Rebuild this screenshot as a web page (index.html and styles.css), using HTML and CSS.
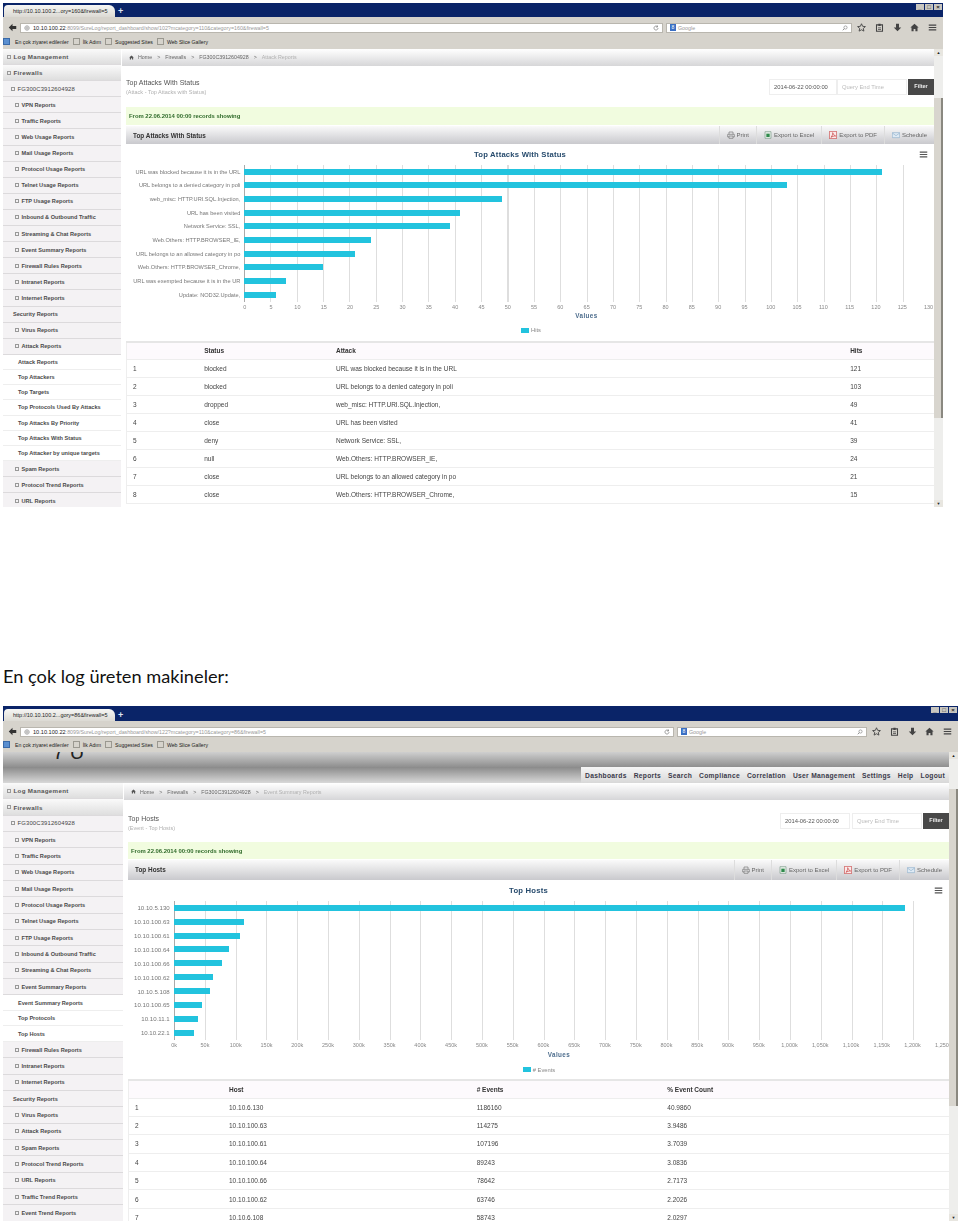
FILE: index.html
```html
<!DOCTYPE html>
<html lang="tr">
<head>
    <meta charset="UTF-8">
    <meta name="viewport" content="width=device-width, initial-scale=1.0">
    <title>SureLog raporlari</title>
    <link rel="stylesheet" href="styles.css">
</head>
<body>
    <svg class="sprite" xmlns="http://www.w3.org/2000/svg">
        <symbol id="i-back" viewBox="0 0 12 12"><path d="M1 6l5-5v3h5v4H6v3z"/></symbol>
        <symbol id="i-globe" viewBox="0 0 12 12"><circle cx="6" cy="6" r="4.5" fill="none" stroke="currentColor"/><path d="M1.5 6h9M6 1.5v9" stroke="currentColor" fill="none"/></symbol>
        <symbol id="i-reload" viewBox="0 0 12 12"><path d="M10 6a4 4 0 1 1-1.2-2.8M9 1v3H6" fill="none" stroke="currentColor" stroke-width="1.4"/></symbol>
        <symbol id="i-search" viewBox="0 0 12 12"><circle cx="7" cy="5" r="3.2" fill="none" stroke="currentColor" stroke-width="1.2"/><path d="M4.6 7.4L1.5 10.5" stroke="currentColor" stroke-width="1.6"/></symbol>
        <symbol id="i-star" viewBox="0 0 12 12"><path d="M6 1l1.5 3.4 3.7.4-2.8 2.4.8 3.6L6 9l-3.200 1.800.8-3.600L.8 4.800l3.700-.4z" fill="none" stroke="currentColor" stroke-width="1.200"/></symbol>
        <symbol id="i-clip" viewBox="0 0 12 12"><path d="M2 2.500h8v8.500H2z" fill="none" stroke="currentColor" stroke-width="1.400"/><path d="M4.500 1h3v3h-3zM4 6h4v1H4zM4 8h4v1H4z"/></symbol>
        <symbol id="i-down" viewBox="0 0 12 12"><path d="M4 1h4v5h3l-5 5-5-5h3z"/></symbol>
        <symbol id="i-home" viewBox="0 0 12 12"><path d="M6 1l5.500 5H10v5H7.200V8H4.800v3H2V6H.5z"/></symbol>
        <symbol id="i-menu" viewBox="0 0 12 12"><path d="M1 2h10v1.600H1zM1 5.200h10v1.600H1zM1 8.400h10V10H1z"/></symbol>
        <symbol id="i-print" viewBox="0 0 12 12"><path d="M3 5V1.500h6V5M1 5h10v4H9M3 9H1V5M3 7.500h6V11H3z" fill="none" stroke="currentColor"/></symbol>
        <symbol id="i-excel" viewBox="0 0 12 12"><path d="M1.500 1h9v10h-9z" fill="#e8f0e8" stroke="#7a9a8a"/><path d="M3.500 4h5v5h-5z" fill="#2f8a4c"/></symbol>
        <symbol id="i-pdf" viewBox="0 0 12 12"><path d="M.5.5h11v11H.5z" fill="#fbeaea" stroke="#c43a3a"/><path d="M3 9.500C5 7 6 4.500 5.500 2.500 6.500 5 8 7 10 7.500 7.500 7.500 5 8 3 9.500z" fill="none" stroke="#c43a3a"/></symbol>
        <symbol id="i-mail" viewBox="0 0 12 12"><path d="M.5 2.500h11v7.500H.5z" fill="#dfeaf4" stroke="#8fb0cc"/><path d="M.5 3L6 7l5.500-4" fill="none" stroke="#8fb0cc"/></symbol>
    </svg>

    <section class="shot shot-attacks">
        <div class="titlebar">
            <div class="tab">http://10.10.100.2...ory=160&amp;firewall=5</div>
            <span class="new-tab">+</span>
            <div class="win-buttons"><i>_</i><i>&#9633;</i><i>&times;</i></div>
        </div>
        <div class="navbar">
            <svg class="nav-back"><use href="#i-back"/></svg>
            <div class="urlbar">
                <svg class="tb-icon small"><use href="#i-globe"/></svg>
                <b>10.10.100.22</b><span>:8099/SureLog/report_dashboard/show/102?mcategory=110&amp;category=160&amp;firewall=5</span>
                <svg class="tb-icon small push"><use href="#i-reload"/></svg>
            </div>
            <div class="searchbar">
                <em>8</em><span>Google</span>
                <svg class="tb-icon small push"><use href="#i-search"/></svg>
            </div>
            <div class="nav-icons">
                <svg class="tb-icon"><use href="#i-star"/></svg>
                <svg class="tb-icon"><use href="#i-clip"/></svg>
                <svg class="tb-icon"><use href="#i-down"/></svg>
                <svg class="tb-icon"><use href="#i-home"/></svg>
                <svg class="tb-icon"><use href="#i-menu"/></svg>
            </div>
        </div>
        <div class="bookmarks">
            <span class="bm bm-first">En çok ziyaret edilenler</span>
            <span class="bm">İlk Adım</span>
            <span class="bm">Suggested Sites</span>
            <span class="bm">Web Slice Gallery</span>
        </div>
        <div class="app">
            <div class="app-main">
                <aside class="sidebar">
                    <div class="side-top">Log Management</div>
                    <div class="side-top">Firewalls</div>
                    <div class="side-device">FG300C3912604928</div>
                    <div class="side-item">VPN Reports</div>
                    <div class="side-item">Traffic Reports</div>
                    <div class="side-item">Web Usage Reports</div>
                    <div class="side-item">Mail Usage Reports</div>
                    <div class="side-item">Protocol Usage Reports</div>
                    <div class="side-item">Telnet Usage Reports</div>
                    <div class="side-item">FTP Usage Reports</div>
                    <div class="side-item">Inbound &amp; Outbound Traffic</div>
                    <div class="side-item">Streaming &amp; Chat Reports</div>
                    <div class="side-item">Event Summary Reports</div>
                    <div class="side-item">Firewall Rules Reports</div>
                    <div class="side-item">Intranet Reports</div>
                    <div class="side-item">Internet Reports</div>
                    <div class="side-group">Security Reports</div>
                    <div class="side-item">Virus Reports</div>
                    <div class="side-item">Attack Reports</div>
                    <div class="side-sub">Attack Reports</div>
                    <div class="side-sub">Top Attackers</div>
                    <div class="side-sub">Top Targets</div>
                    <div class="side-sub">Top Protocols Used By Attacks</div>
                    <div class="side-sub">Top Attacks By Priority</div>
                    <div class="side-sub">Top Attacks With Status</div>
                    <div class="side-sub">Top Attacker by unique targets</div>
                    <div class="side-item">Spam Reports</div>
                    <div class="side-item">Protocol Trend Reports</div>
                    <div class="side-item">URL Reports</div>
                </aside>
                <main class="content">
                    <div class="crumbs">
                        <svg class="crumb-home"><use href="#i-home"/></svg>
                        <span>Home</span><span>&gt;</span><span>Firewalls</span><span>&gt;</span><span>FG300C3912604928</span><span>&gt;</span><span class="crumb-last">Attack Reports</span>
                    </div>
                    <div class="inner">
                        <div class="page-head">
                            <div class="page-titles">
                                <div class="page-title">Top Attacks With Status</div>
                                <div class="page-sub">(Attack - Top Attacks with Status)</div>
                            </div>
                            <div class="filters">
                                <div class="field">2014-06-22 00:00:00</div>
                                <div class="field placeholder">Query End Time</div>
                                <div class="filter-btn">Filter</div>
                            </div>
                        </div>
                        <div class="alert">From 22.06.2014 00:00 records showing</div>
                        <div class="panel-head">
                            <span class="panel-title">Top Attacks With Status</span>
                            <div class="panel-actions">
                                <span class="act"><svg><use href="#i-print"/></svg>Print</span>
                                <span class="act"><svg><use href="#i-excel"/></svg>Export to Excel</span>
                                <span class="act"><svg><use href="#i-pdf"/></svg>Export to PDF</span>
                                <span class="act"><svg><use href="#i-mail"/></svg>Schedule</span>
                            </div>
                        </div>
                        <div class="chart">
                            <div class="chart-title">Top Attacks With Status</div>
                            <svg class="chart-menu"><use href="#i-menu"/></svg>
                            <div class="plot">
                                <div class="bar-row"><span class="bar-label">URL was blocked because it is in the URL</span><div class="bar-track"><div class="bar" style="width:93.08%"></div></div></div>
                                <div class="bar-row"><span class="bar-label">URL belongs to a denied category in poli</span><div class="bar-track"><div class="bar" style="width:79.23%"></div></div></div>
                                <div class="bar-row"><span class="bar-label">web_misc: HTTP.URI.SQL.Injection,</span><div class="bar-track"><div class="bar" style="width:37.69%"></div></div></div>
                                <div class="bar-row"><span class="bar-label">URL has been visited</span><div class="bar-track"><div class="bar" style="width:31.54%"></div></div></div>
                                <div class="bar-row"><span class="bar-label">Network Service: SSL,</span><div class="bar-track"><div class="bar" style="width:30%"></div></div></div>
                                <div class="bar-row"><span class="bar-label">Web.Others: HTTP.BROWSER_IE,</span><div class="bar-track"><div class="bar" style="width:18.46%"></div></div></div>
                                <div class="bar-row"><span class="bar-label">URL belongs to an allowed category in po</span><div class="bar-track"><div class="bar" style="width:16.15%"></div></div></div>
                                <div class="bar-row"><span class="bar-label">Web.Others: HTTP.BROWSER_Chrome,</span><div class="bar-track"><div class="bar" style="width:11.54%"></div></div></div>
                                <div class="bar-row"><span class="bar-label">URL was exempted because it is in the UR</span><div class="bar-track"><div class="bar" style="width:6.15%"></div></div></div>
                                <div class="bar-row"><span class="bar-label">Update: NOD32.Update,</span><div class="bar-track"><div class="bar" style="width:4.62%"></div></div></div>
                            </div>
                            <div class="axis">
                                <span>0</span><span>5</span><span>10</span><span>15</span><span>20</span><span>25</span><span>30</span><span>35</span><span>40</span><span>45</span><span>50</span><span>55</span><span>60</span><span>65</span><span>70</span><span>75</span><span>80</span><span>85</span><span>90</span><span>95</span><span>100</span><span>105</span><span>110</span><span>115</span><span>120</span><span>125</span><span>130</span>
                            </div>
                            <div class="axis-title">Values</div>
                            <div class="legend"><i></i>Hits</div>
                        </div>
                        <table class="data">
                            <thead><tr><th></th><th>Status</th><th>Attack</th><th>Hits</th></tr></thead>
                            <tbody>
                                <tr><td>1</td><td>blocked</td><td>URL was blocked because it is in the URL</td><td>121</td></tr>
                                <tr><td>2</td><td>blocked</td><td>URL belongs to a denied category in poli</td><td>103</td></tr>
                                <tr><td>3</td><td>dropped</td><td>web_misc: HTTP.URI.SQL.Injection,</td><td>49</td></tr>
                                <tr><td>4</td><td>close</td><td>URL has been visited</td><td>41</td></tr>
                                <tr><td>5</td><td>deny</td><td>Network Service: SSL,</td><td>39</td></tr>
                                <tr><td>6</td><td>null</td><td>Web.Others: HTTP.BROWSER_IE,</td><td>24</td></tr>
                                <tr><td>7</td><td>close</td><td>URL belongs to an allowed category in po</td><td>21</td></tr>
                                <tr><td>8</td><td>close</td><td>Web.Others: HTTP.BROWSER_Chrome,</td><td>15</td></tr>
                            </tbody>
                        </table>
                    </div>
                </main>
            </div>
            <div class="scrollbar"><span class="sb-arrow">&#9650;</span><div class="sb-thumb"></div><span class="sb-arrow">&#9660;</span></div>
        </div>
    </section>

    <p class="doc-line">En çok log üreten makineler:</p>

    <section class="shot shot-hosts">
        <div class="titlebar">
            <div class="tab">http://10.10.100.2...gory=86&amp;firewall=5</div>
            <span class="new-tab">+</span>
            <div class="win-buttons"><i>_</i><i>&#9633;</i><i>&times;</i></div>
        </div>
        <div class="navbar">
            <svg class="nav-back"><use href="#i-back"/></svg>
            <div class="urlbar">
                <svg class="tb-icon small"><use href="#i-globe"/></svg>
                <b>10.10.100.22</b><span>:8099/SureLog/report_dashboard/show/122?mcategory=110&amp;category=86&amp;firewall=5</span>
                <svg class="tb-icon small push"><use href="#i-reload"/></svg>
            </div>
            <div class="searchbar">
                <em>8</em><span>Google</span>
                <svg class="tb-icon small push"><use href="#i-search"/></svg>
            </div>
            <div class="nav-icons">
                <svg class="tb-icon"><use href="#i-star"/></svg>
                <svg class="tb-icon"><use href="#i-clip"/></svg>
                <svg class="tb-icon"><use href="#i-down"/></svg>
                <svg class="tb-icon"><use href="#i-home"/></svg>
                <svg class="tb-icon"><use href="#i-menu"/></svg>
            </div>
        </div>
        <div class="bookmarks">
            <span class="bm bm-first">En çok ziyaret edilenler</span>
            <span class="bm">İlk Adım</span>
            <span class="bm">Suggested Sites</span>
            <span class="bm">Web Slice Gallery</span>
        </div>
        <div class="app">
            <div class="app-main">
                <div class="logo-band"><span class="logo-cut">7 U</span></div>
                <nav class="top-menu">
                    <div class="menu-items">
                        <span>Dashboards</span><span>Reports</span><span>Search</span><span>Compliance</span><span>Correlation</span><span>User Management</span><span>Settings</span><span>Help</span><span>Logout</span>
                    </div>
                </nav>
                <div class="app-body">
                    <aside class="sidebar">
                        <div class="side-top">Log Management</div>
                        <div class="side-top">Firewalls</div>
                        <div class="side-device">FG300C3912604928</div>
                        <div class="side-item">VPN Reports</div>
                        <div class="side-item">Traffic Reports</div>
                        <div class="side-item">Web Usage Reports</div>
                        <div class="side-item">Mail Usage Reports</div>
                        <div class="side-item">Protocol Usage Reports</div>
                        <div class="side-item">Telnet Usage Reports</div>
                        <div class="side-item">FTP Usage Reports</div>
                        <div class="side-item">Inbound &amp; Outbound Traffic</div>
                        <div class="side-item">Streaming &amp; Chat Reports</div>
                        <div class="side-item">Event Summary Reports</div>
                        <div class="side-sub">Event Summary Reports</div>
                        <div class="side-sub">Top Protocols</div>
                        <div class="side-sub">Top Hosts</div>
                        <div class="side-item">Firewall Rules Reports</div>
                        <div class="side-item">Intranet Reports</div>
                        <div class="side-item">Internet Reports</div>
                        <div class="side-group">Security Reports</div>
                        <div class="side-item">Virus Reports</div>
                        <div class="side-item">Attack Reports</div>
                        <div class="side-item">Spam Reports</div>
                        <div class="side-item">Protocol Trend Reports</div>
                        <div class="side-item">URL Reports</div>
                        <div class="side-item">Traffic Trend Reports</div>
                        <div class="side-item">Event Trend Reports</div>
                    </aside>
                    <main class="content">
                        <div class="crumbs">
                            <svg class="crumb-home"><use href="#i-home"/></svg>
                            <span>Home</span><span>&gt;</span><span>Firewalls</span><span>&gt;</span><span>FG300C3912604928</span><span>&gt;</span><span class="crumb-last">Event Summary Reports</span>
                        </div>
                        <div class="inner">
                            <div class="page-head">
                                <div class="page-titles">
                                    <div class="page-title">Top Hosts</div>
                                    <div class="page-sub">(Event - Top Hosts)</div>
                                </div>
                                <div class="filters">
                                    <div class="field">2014-06-22 00:00:00</div>
                                    <div class="field placeholder">Query End Time</div>
                                    <div class="filter-btn">Filter</div>
                                </div>
                            </div>
                            <div class="alert">From 22.06.2014 00:00 records showing</div>
                            <div class="panel-head">
                                <span class="panel-title">Top Hosts</span>
                                <div class="panel-actions">
                                    <span class="act"><svg><use href="#i-print"/></svg>Print</span>
                                    <span class="act"><svg><use href="#i-excel"/></svg>Export to Excel</span>
                                    <span class="act"><svg><use href="#i-pdf"/></svg>Export to PDF</span>
                                    <span class="act"><svg><use href="#i-mail"/></svg>Schedule</span>
                                </div>
                            </div>
                            <div class="chart">
                                <div class="chart-title">Top Hosts</div>
                                <svg class="chart-menu"><use href="#i-menu"/></svg>
                                <div class="plot">
                                    <div class="bar-row"><span class="bar-label">10.10.5.130</span><div class="bar-track"><div class="bar" style="width:94.89%"></div></div></div>
                                    <div class="bar-row"><span class="bar-label">10.10.100.63</span><div class="bar-track"><div class="bar" style="width:9.14%"></div></div></div>
                                    <div class="bar-row"><span class="bar-label">10.10.100.61</span><div class="bar-track"><div class="bar" style="width:8.58%"></div></div></div>
                                    <div class="bar-row"><span class="bar-label">10.10.100.64</span><div class="bar-track"><div class="bar" style="width:7.14%"></div></div></div>
                                    <div class="bar-row"><span class="bar-label">10.10.100.66</span><div class="bar-track"><div class="bar" style="width:6.29%"></div></div></div>
                                    <div class="bar-row"><span class="bar-label">10.10.100.62</span><div class="bar-track"><div class="bar" style="width:5.1%"></div></div></div>
                                    <div class="bar-row"><span class="bar-label">10.10.5.108</span><div class="bar-track"><div class="bar" style="width:4.7%"></div></div></div>
                                    <div class="bar-row"><span class="bar-label">10.10.100.65</span><div class="bar-track"><div class="bar" style="width:3.65%"></div></div></div>
                                    <div class="bar-row"><span class="bar-label">10.10.11.1</span><div class="bar-track"><div class="bar" style="width:3.1%"></div></div></div>
                                    <div class="bar-row"><span class="bar-label">10.10.22.1</span><div class="bar-track"><div class="bar" style="width:2.7%"></div></div></div>
                                </div>
                                <div class="axis">
                                    <span>0k</span><span>50k</span><span>100k</span><span>150k</span><span>200k</span><span>250k</span><span>300k</span><span>350k</span><span>400k</span><span>450k</span><span>500k</span><span>550k</span><span>600k</span><span>650k</span><span>700k</span><span>750k</span><span>800k</span><span>850k</span><span>900k</span><span>950k</span><span>1,000k</span><span>1,050k</span><span>1,100k</span><span>1,150k</span><span>1,200k</span><span>1,250k</span>
                                </div>
                                <div class="axis-title">Values</div>
                                <div class="legend"><i></i># Events</div>
                            </div>
                            <table class="data">
                                <thead><tr><th></th><th>Host</th><th># Events</th><th>% Event Count</th></tr></thead>
                                <tbody>
                                    <tr><td>1</td><td>10.10.6.130</td><td>1186160</td><td>40.9860</td></tr>
                                    <tr><td>2</td><td>10.10.100.63</td><td>114275</td><td>3.9486</td></tr>
                                    <tr><td>3</td><td>10.10.100.61</td><td>107196</td><td>3.7039</td></tr>
                                    <tr><td>4</td><td>10.10.100.64</td><td>89243</td><td>3.0836</td></tr>
                                    <tr><td>5</td><td>10.10.100.66</td><td>78642</td><td>2.7173</td></tr>
                                    <tr><td>6</td><td>10.10.100.62</td><td>63746</td><td>2.2026</td></tr>
                                    <tr><td>7</td><td>10.10.6.108</td><td>58743</td><td>2.0297</td></tr>
                                </tbody>
                            </table>
                        </div>
                    </main>
                </div>
            </div>
            <div class="scrollbar"><span class="sb-arrow">&#9650;</span><div class="sb-thumb"></div><span class="sb-arrow">&#9660;</span></div>
        </div>
    </section>
</body>
</html>
```

FILE: styles.css
```css
body, html {
    margin: 0;
    background-color: #fff;
    font-family: 'Liberation Sans', Arial, sans-serif;
}

body {
    height: 1223px;
    overflow: hidden;
    padding-top: 3px;
    box-sizing: border-box;
}

.sprite { display: none; }

.doc-line {
    margin: 0;
    font-family: 'Lato', sans-serif;
    font-size: 18.2px;
    line-height: 24px;
    color: #111;
    padding-left: 3px;
}

/* one block per browser window */
.shot {
    margin-left: 3px;
    display: flex;
    flex-direction: column;
    overflow: hidden;
    filter: blur(0.3px);
}

.shot-attacks {
    width: 940px;
    height: 504px;
    margin-bottom: 157px;
    --side-w: 118px;
    --gap: 4px;
    --row: 16.1px;
    --sub: 15.2px;
    --crumb-h: 16.5px;
    --head-h: 41.5px;
    --title-pad: 0px;
    --alert-h: 18px;
    --panel-h: 18px;
    --title-h: 21px;
    --bar-row: 13.67px;
    --label-w: 118.3px;
    --label-fs: 5.65px;
    --axis-h: 10px;
    --legend-h: 21.3px;
    --legend-pad: 0px;
    --axis-pad: 113px;
    --th-h: 17.5px;
    --td-h: 18.05px;
    --c1: 71.7px;
    --c2: 131.8px;
    --c3: 514.2px;
    --plot-r: 4.7px;
    --search-w: 186px;
    --url-w: 643px;
    --legend-x: 395px;
    --field-w: 68px;
    --field-gap: 0px;
}

.shot-hosts {
    width: 955px;
    height: 515px;
    margin-top: 18px;
    --side-w: 120px;
    --gap: 4px;
    --row: 16.35px;
    --sub: 15.5px;
    --crumb-h: 17px;
    --head-h: 42.3px;
    --title-pad: 1.5px;
    --alert-h: 16.5px;
    --panel-h: 20px;
    --title-h: 21px;
    --bar-row: 13.9px;
    --label-w: 45.7px;
    --label-fs: 6.1px;
    --axis-h: 11px;
    --legend-h: 20.3px;
    --legend-pad: 2px;
    --axis-pad: 41px;
    --th-h: 18px;
    --td-h: 18.4px;
    --c1: 94.5px;
    --c2: 247.7px;
    --c3: 190.6px;
    --plot-r: 5px;
    --search-w: 190px;
    --url-w: 654px;
    --legend-x: 394.7px;
    --field-w: 70px;
    --field-gap: 2px;
}

.titlebar {
    height: 14px;
    background-color: #0a2468;
    display: flex;
    align-items: flex-end;
    flex: none;
}

.shot-hosts .titlebar { height: 15px; }

.tab {
    width: 102px;
    height: 12px;
    margin-left: 1px;
    padding-left: 9px;
    background: linear-gradient(#f6f6f4, #dcdad4);
    border-radius: 4px 6px 0 0;
    font-size: 5.5px;
    line-height: 12px;
    color: #222;
    white-space: nowrap;
}

.new-tab {
    color: #dfe6f5;
    font-size: 9px;
    line-height: 12px;
    font-weight: bold;
    margin-left: 3px;
}

.win-buttons {
    margin-left: auto;
    margin-right: 1px;
    display: flex;
    align-self: flex-start;
    margin-top: 1px;
    gap: 1px;
}

.win-buttons i {
    width: 8px;
    height: 6px;
    background-color: #c8c6c0;
    font-style: normal;
    font-size: 6px;
    line-height: 6px;
    text-align: center;
    color: #222;
    font-weight: bold;
}

.navbar {
    height: 16px;
    background-color: #d6d3cc;
    display: flex;
    align-items: flex-end;
    flex: none;
}

.nav-back {
    width: 9px;
    height: 9px;
    margin: 0 3px 1px 5px;
    fill: #333;
    flex: none;
}

.urlbar, .searchbar {
    height: 10.5px;
    background-color: #fff;
    border: 1px solid #b9b6ae;
    box-sizing: border-box;
    display: flex;
    align-items: center;
    font-size: 5.3px;
    color: #999;
    white-space: nowrap;
    padding: 0 3px;
    gap: 2px;
    flex: none;
}

.urlbar { width: var(--url-w); }
.urlbar b { font-weight: normal; color: #222; font-size: 5.6px; margin-left: 1px; }
.urlbar span { margin-left: -2px; }

.searchbar { width: var(--search-w); margin-left: 3px; }
.searchbar em {
    width: 6px;
    height: 7px;
    background-color: #3a6fc4;
    color: #fff;
    font-style: normal;
    font-size: 5px;
    line-height: 7px;
    text-align: center;
}

.tb-icon { width: 9px; height: 9px; fill: #444; color: #444; flex: none; }
.tb-icon.small { width: 6px; height: 6px; color: #777; fill: #777; }
.push { margin-left: auto; }

.nav-icons {
    flex: 1;
    display: flex;
    justify-content: space-between;
    align-items: center;
    height: 12px;
    padding: 0 6px 0 5px;
}

.bookmarks {
    height: 16px;
    background-color: #d6d3cc;
    display: flex;
    align-items: center;
    font-size: 5.2px;
    color: #222;
    white-space: nowrap;
    flex: none;
    gap: 4px;
}

.shot-hosts .bookmarks { height: 15px; }

.bm::before {
    content: "";
    display: inline-block;
    width: 5px;
    height: 5px;
    border: 1px solid #9a9890;
    margin-right: 3px;
    vertical-align: -1px;
}

.bm-first::before { background-color: #5a8fd0; border-color: #3a6aa8; margin-right: 5px; }

.app { flex: 1; display: flex; min-height: 0; }
.app-main { flex: 1; min-width: 0; overflow: hidden; display: flex; }
.shot-hosts .app-main { flex-direction: column; }
.app-body { display: flex; flex: 1; min-height: 0; }

.logo-band {
    height: 15px;
    background: linear-gradient(#cfcfcf, #8f8f8f);
    overflow: hidden;
    flex: none;
}

/* only the bottom of the logo is still on screen, the rest is scrolled away */
.logo-cut {
    display: block;
    height: 7px;
    margin-left: 50px;
    font-size: 20px;
    line-height: 0;
    color: #222;
}

.top-menu {
    height: 16px;
    background: linear-gradient(#8a8a8a, #d8d8d8);
    display: flex;
    justify-content: flex-end;
    flex: none;
}

.menu-items {
    width: 368px;
    padding: 0 4px;
    box-sizing: border-box;
    background: linear-gradient(#f6f6f6, #d8d8d8);
    display: flex;
    justify-content: space-between;
    align-items: center;
    font-size: 6.7px;
    font-weight: bold;
    letter-spacing: 0.3px;
    color: #3a3a4a;
}

.sidebar {
    width: var(--side-w);
    flex: none;
    margin-right: 1px;
    font-size: 5.6px;
    font-weight: bold;
    color: #4a4a4a;
    white-space: nowrap;
    overflow: hidden;
}

.side-top, .side-device, .side-item, .side-group, .side-sub {
    display: flex;
    align-items: center;
    box-sizing: border-box;
    height: var(--row);
    border-bottom: 1px solid #dcdadc;
}

.side-top {
    background: linear-gradient(#fafafa, #dedede);
    padding-left: 4px;
    font-size: 6.2px;
    letter-spacing: 0.3px;
    color: #555;
}

.side-top::before, .side-device::before, .side-item::before {
    content: "";
    width: 2px;
    height: 2px;
    border: 0.7px solid #999;
    margin-right: 2.5px;
    flex: none;
}

.side-device {
    background-color: #f4f2f4;
    padding-left: 8px;
    font-size: 5.9px;
    font-weight: normal;
    letter-spacing: 0.15px;
    color: #444;
}

.side-item {
    background-color: #f4f2f4;
    padding-left: 12px;
}

.side-group {
    background-color: #f4f2f4;
    padding-left: 10px;
}

.side-sub {
    background-color: #fff;
    padding-left: 15px;
    height: var(--sub);
    border-color: #eee;
}

.content {
    flex: 1;
    min-width: 0;
    overflow: hidden;
    font-size: 6.5px;
    color: #444;
}

.crumbs {
    height: var(--crumb-h);
    background: linear-gradient(#fff, #d6d6d8);
    display: flex;
    align-items: center;
    gap: 5px;
    padding-left: 7px;
    font-size: 5.3px;
    color: #666;
    white-space: nowrap;
}

.crumb-home { width: 5px; height: 5px; fill: #555; margin-right: -1px; }
.crumb-last { color: #b0b0b0; }

.inner { margin-left: var(--gap); }

.page-head {
    height: var(--head-h);
    box-sizing: border-box;
    padding-top: 12px;
    display: flex;
    justify-content: space-between;
}

.page-titles { padding-top: var(--title-pad); }
.page-title { font-size: 7px; color: #555; line-height: 10px; }
.page-sub { font-size: 5.5px; color: #b0b0b0; line-height: 8px; }

.filters { display: flex; height: 16px; margin-top: 1px; font-size: 5.8px; color: #555; }

.field {
    width: var(--field-w);
    margin-right: var(--field-gap);
    box-sizing: border-box;
    border: 1px solid #eee;
    padding-left: 4px;
    line-height: 14px;
    white-space: nowrap;
}

.field.placeholder { width: 70px; color: #bbb; margin-right: 1px; }

.filter-btn {
    width: 26px;
    background-color: #484848;
    color: #eee;
    font-weight: bold;
    font-size: 5.5px;
    text-align: center;
    line-height: 15px;
}

.alert {
    height: var(--alert-h);
    background-color: #f1fcdf;
    font-size: 5.9px;
    font-weight: bold;
    color: #2f6a2a;
    display: flex;
    align-items: center;
    padding-left: 3px;
}

.panel-head {
    height: var(--panel-h);
    margin-top: 1px;
    background: linear-gradient(#fafafa, #c9c9cd);
    display: flex;
    align-items: center;
    justify-content: space-between;
    padding-left: 7px;
}

.panel-title { font-size: 6.4px; font-weight: bold; color: #333; }

.panel-actions { display: flex; height: 100%; font-size: 6px; color: #666; }

.act {
    display: flex;
    align-items: center;
    gap: 2px;
    padding: 0 7px;
    border-left: 1px solid #ddd;
    white-space: nowrap;
}

.act svg { width: 8px; height: 8px; color: #777; flex: none; }

/* chart: grid lines are a repeated background on .plot */
.chart { position: relative; overflow: hidden; }

.chart-title {
    height: var(--title-h);
    box-sizing: border-box;
    padding: 6px 20px 0 0;
    line-height: 10px;
    text-align: center;
    font-size: 7.7px;
    font-weight: bold;
    letter-spacing: 0.2px;
    color: #274b6d;
}

.chart-menu {
    position: absolute;
    top: 6px;
    right: 6px;
    width: 9px;
    height: 9px;
    fill: #555;
}

.plot {
    margin-left: var(--label-w);
    margin-right: var(--plot-r);
}

.shot-attacks .plot {
    background-image:
        linear-gradient(90deg, #aaa 0 1px, transparent 1px),
        repeating-linear-gradient(90deg, #dedede 0 1px, transparent 1px 26.35px);
}

.shot-hosts .plot {
    background-image:
        linear-gradient(90deg, #aaa 0 1px, transparent 1px),
        repeating-linear-gradient(90deg, #dedede 0 1px, transparent 1px 30.8px);
}

.bar-row {
    display: flex;
    align-items: center;
    height: var(--bar-row);
    margin-left: calc(-1 * var(--label-w));
}

.bar-label {
    width: var(--label-w);
    flex: none;
    box-sizing: border-box;
    padding-right: 4px;
    text-align: right;
    font-size: var(--label-fs);
    color: #777;
    white-space: nowrap;
    overflow: hidden;
}

.bar-track { flex: 1; min-width: 0; }
.bar { height: 6px; background-color: #22c3de; }

.axis {
    display: flex;
    justify-content: space-between;
    margin-left: var(--label-w);
    margin-right: var(--plot-r);
    height: var(--axis-h);
    font-size: 5.5px;
    line-height: 10px;
    color: #888;
}

.axis span {
    width: 1px;
    display: flex;
    justify-content: center;
    white-space: nowrap;
}

.axis-title {
    text-align: center;
    height: 8px;
    line-height: 8px;
    font-size: 6.3px;
    font-weight: bold;
    letter-spacing: 0.4px;
    color: #4d6d8d;
    padding-left: var(--axis-pad);
    box-sizing: border-box;
}

.legend {
    height: var(--legend-h);
    box-sizing: border-box;
    padding: var(--legend-pad) 0 0 var(--legend-x);
    display: flex;
    align-items: center;
    gap: 2px;
    font-size: 5.8px;
    color: #888;
}

.legend i { width: 8px; height: 5px; background-color: #22c3de; }

.data {
    width: 100%;
    border-collapse: collapse;
    table-layout: fixed;
    border-top: 2px solid #e6e6e6;
    border-left: 1px solid #eee;
    font-size: 6.5px;
    color: #444;
}

.data th {
    height: var(--th-h);
    background-color: #fdfafd;
    text-align: left;
    font-weight: bold;
    color: #333;
}

.data th, .data td {
    padding: 0 0 0 6px;
    border-bottom: 1px solid #eee;
    white-space: nowrap;
    overflow: hidden;
    box-sizing: border-box;
}

.data td { height: var(--td-h); }
.data th:nth-child(1) { width: var(--c1); }
.data th:nth-child(2) { width: var(--c2); }
.data th:nth-child(3) { width: var(--c3); }

.scrollbar {
    width: 9px;
    flex: none;
    display: flex;
    flex-direction: column;
    background-color: #eeeeec;
    font-size: 4px;
    color: #222;
}

.sb-arrow {
    height: 7px;
    background-color: #e8e6e0;
    text-align: center;
    line-height: 7px;
    flex: none;
}

.sb-thumb {
    margin-top: 42px;
    height: 320px;
    background-color: #d8d5ce;
    border-right: 2px solid #8a8880;
    box-sizing: border-box;
}

.shot-hosts .sb-thumb { margin-top: 30px; height: 317px; }
.sb-thumb + .sb-arrow { margin-top: auto; }
```
